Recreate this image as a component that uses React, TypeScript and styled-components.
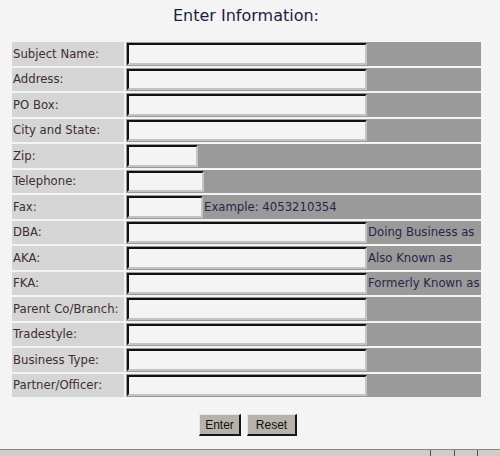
import React from "react";
import styled, { createGlobalStyle } from "styled-components";

const GlobalStyle = createGlobalStyle`
    html, body {
        margin: 0;
        padding: 0;
        background: #f4f4f4;
    }
`;

const Page = styled.div`
    width: 500px;
    height: 456px;
    display: flex;
    flex-direction: column;
    font-family: "DejaVu Sans", Verdana, sans-serif;
    overflow: hidden;
`;

const Title = styled.h1`
    margin: 0;
    padding: 6px 8px 0 0;
    height: 42px;
    box-sizing: border-box;
    text-align: center;
    font-size: 16px;
    font-weight: normal;
    color: #1c1c48;
`;

const Form = styled.div`
    margin-left: 12px;
    display: grid;
    grid-template-columns: 112px 355px;
    grid-auto-rows: 23.5px;
    column-gap: 2px;
    row-gap: 2px;
`;

const Label = styled.div`
    background: #d5d5d5;
    color: #3e2e30;
    font-size: 11.7px;
    display: flex;
    align-items: center;
    padding-left: 1px;
    white-space: nowrap;
`;

const Value = styled.div`
    background: #9a9a9a;
    display: flex;
    align-items: center;
    padding-left: 1px;
`;

const Field = styled.div<{ $width: number }>`
    width: ${p => p.$width}px;
    height: 21.5px;
    box-sizing: border-box;
    flex-shrink: 0;
    background: #f4f4f4;
    border-top: 2px solid #111;
    border-left: 2px solid #111;
    border-right: 2px solid #c4c4c4;
    border-bottom: 2px solid #c4c4c4;
`;

const Hint = styled.span`
    font-size: 11.7px;
    color: #26264a;
    white-space: nowrap;
    padding-left: 1px;
`;

const Buttons = styled.div`
    display: flex;
    justify-content: center;
    gap: 6px;
    margin-top: 17px;
    padding-right: 4px;
`;

const Button = styled.button<{ $width: number }>`
    width: ${p => p.$width}px;
    height: 22px;
    padding: 0;
    background: #b6b2aa;
    font-family: "Liberation Sans", Arial, sans-serif;
    font-size: 12px;
    color: #111;
    border-top: 1px solid #e8e6e0;
    border-left: 1px solid #e8e6e0;
    border-right: 2px solid #161616;
    border-bottom: 2px solid #161616;
`;

const StatusBar = styled.div`
    margin-top: auto;
    height: 6px;
    border-top: 1px solid #8a8682;
    background: #d0ccc6;
    display: flex;
    justify-content: flex-end;
`;

const Pane = styled.div<{ $width: number }>`
    width: ${p => p.$width}px;
    border-left: 1px solid #5a5650;
`;

type Row = {
    label: string;
    width: number;
    hint?: string;
};

const rows: Row[] = [
    { label: "Subject Name:", width: 240 },
    { label: "Address:", width: 240 },
    { label: "PO Box:", width: 240 },
    { label: "City and State:", width: 240 },
    { label: "Zip:", width: 71 },
    { label: "Telephone:", width: 77 },
    { label: "Fax:", width: 76, hint: "Example: 4053210354" },
    { label: "DBA:", width: 240, hint: "Doing Business as" },
    { label: "AKA:", width: 240, hint: "Also Known as" },
    { label: "FKA:", width: 240, hint: "Formerly Known as" },
    { label: "Parent Co/Branch:", width: 240 },
    { label: "Tradestyle:", width: 240 },
    { label: "Business Type:", width: 240 },
    { label: "Partner/Officer:", width: 240 },
];

export default function App() {
    return (
        <React.Fragment>
            <GlobalStyle />
            <Page>
                <Title>Enter Information:</Title>
                <Form>
                    {rows.map((row, idx) => (
                        <React.Fragment key={idx}>
                            <Label>{row.label}</Label>
                            <Value>
                                <Field $width={row.width} />
                                {row.hint && <Hint>{row.hint}</Hint>}
                            </Value>
                        </React.Fragment>
                    ))}
                </Form>
                <Buttons>
                    <Button $width={42}>Enter</Button>
                    <Button $width={50}>Reset</Button>
                </Buttons>
                <StatusBar>
                    <Pane $width={23} />
                    <Pane $width={22} />
                    <Pane $width={22} />
                </StatusBar>
            </Page>
        </React.Fragment>
    );
}
